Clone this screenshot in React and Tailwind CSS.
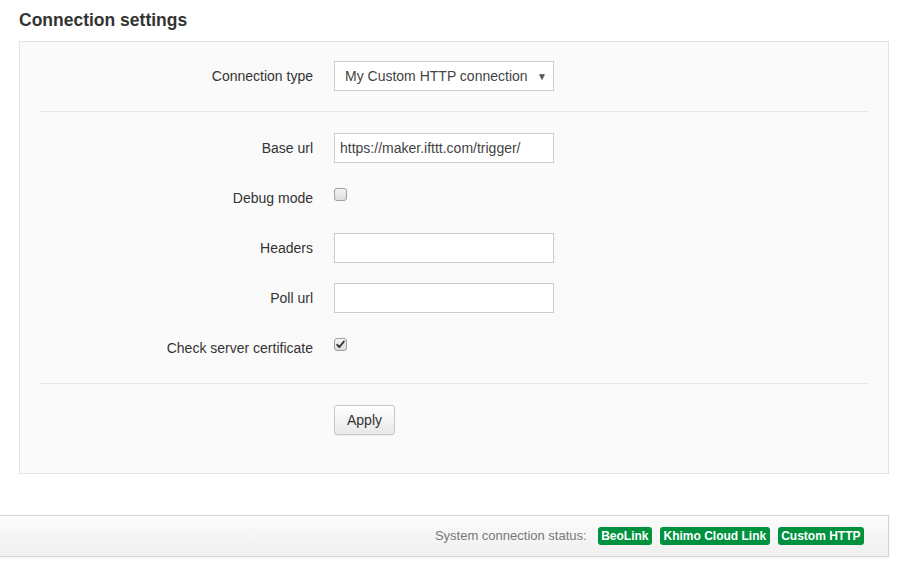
import React from "react";

function Box({ checked }) {
  return (
    <span className="mt-[5px] inline-flex h-[13px] w-[13px] items-center justify-center rounded-[3px] border border-[#a0a0a0] bg-gradient-to-b from-[#f4f4f4] to-[#dcdcdc]">
      {checked && (
        <svg width="9" height="9" viewBox="0 0 9 9">
          <path d="M1.2 4.8 L3.4 7 L7.8 1.6" fill="none" stroke="#333" strokeWidth="1.9" strokeLinecap="round" strokeLinejoin="round" />
        </svg>
      )}
    </span>
  );
}

function Row({ label, children, align = "center" }) {
  return (
    <div className="flex h-[30px] gap-[21px]">
      <div className="flex w-[273px] items-center justify-end text-[14px] text-[#333]">{label}</div>
      <div className={align === "top" ? "flex items-start" : "flex items-center"}>{children}</div>
    </div>
  );
}

function TextInput({ value }) {
  return (
    <div className="flex h-[30px] w-[220px] items-center border border-[#ccc] bg-white pl-[5px] text-[14px] text-[#444]">
      {value}
    </div>
  );
}

export default function App() {
  return (
    <div className="min-h-[571px] bg-white font-['Liberation_Sans',Arial,sans-serif]">
      <div className="px-[19px] pt-[10px]">
        <h2 className="mb-[11px] text-[17.5px] font-bold leading-[20px] text-[#333]">Connection settings</h2>
        <div className="w-[870px] border border-[#e3e3e3] bg-[#fafafa] px-[20px] pt-[19px] pb-[38px]">
          <Row label="Connection type">
            <div className="flex h-[30px] w-[220px] items-center justify-between border border-[#ccc] bg-white pl-[10px] pr-[6px] text-[14px] text-[#444]">
              <span>My Custom HTTP connection</span>
              <span className="text-[10px] text-[#555]">▼</span>
            </div>
          </Row>
          <div className="my-[20px] h-px bg-[#e8e8e8]" />
          <div className="flex flex-col gap-[20px] pt-px">
            <Row label="Base url">
              <TextInput value="https://maker.ifttt.com/trigger/" />
            </Row>
            <Row label="Debug mode" align="top">
              <Box />
            </Row>
            <Row label="Headers">
              <TextInput value="" />
            </Row>
            <Row label="Poll url">
              <TextInput value="" />
            </Row>
            <Row label="Check server certificate" align="top">
              <Box checked />
            </Row>
          </div>
          <div className="my-[20px] h-px bg-[#e8e8e8]" />
          <div className="flex gap-[21px] pt-px">
            <div className="w-[273px]" />
            <button className="h-[30px] w-[61px] rounded-[3px] border border-[#c8c8c8] bg-gradient-to-b from-white to-[#e8e8e8] text-[14px] text-[#333] shadow-[0_1px_1px_rgba(0,0,0,0.05)]">
              Apply
            </button>
          </div>
        </div>
      </div>
      <div className="mt-[41px] flex h-[42px] w-[889px] items-center justify-end border border-l-0 border-[#d4d4d4] bg-gradient-to-b from-[#fcfcfc] to-[#efefef] pr-[24px] shadow-[0_1px_3px_rgba(0,0,0,0.06)]">
        <span className="mr-[11px] text-[13px] text-[#777]">System connection status:</span>
        <div className="flex gap-[8px]">
          {["BeoLink", "Khimo Cloud Link", "Custom HTTP"].map((b) => (
            <span key={b} className="flex h-[18px] items-center rounded-[3px] bg-[#00913f] px-[3.5px] text-[12px] font-bold text-white">
              {b}
            </span>
          ))}
        </div>
      </div>
    </div>
  );
}
